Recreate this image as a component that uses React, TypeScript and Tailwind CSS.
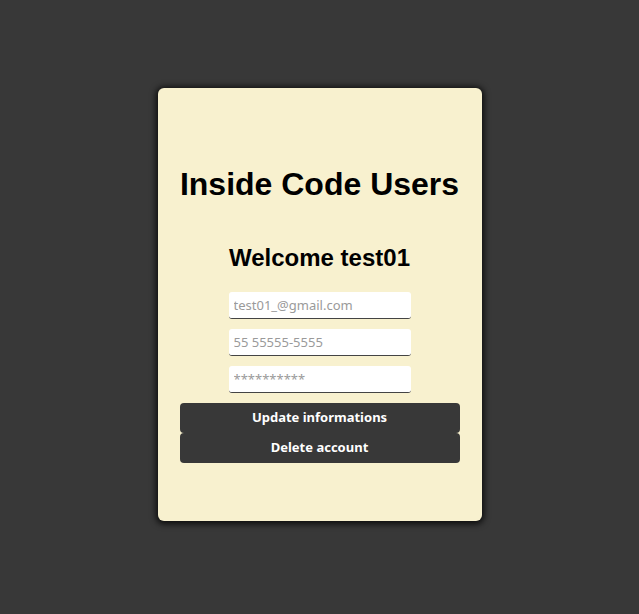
export default function App() {
  return (
    <div className="min-h-screen bg-[#383838] flex items-center justify-center pb-[5px]">
      <div className="w-[324px] h-[433px] bg-[#f8f1cf] rounded-[6px] shadow-[0_1px_6px_2px_rgba(0,0,0,0.8)] flex flex-col items-center pt-[78px] font-['Liberation_Sans',Arial,sans-serif]">
        <h1 className="text-[32px] leading-[37px] font-bold text-black">Inside Code Users</h1>
        <h2 className="mt-[41px] text-[24px] leading-[28px] font-bold text-black">Welcome test01</h2>

        <div className="mt-[20px] flex flex-col gap-[10px] font-['Noto_Sans',sans-serif]">
          <input
            className="w-[182px] h-[27px] bg-white rounded-[3px] border-b border-[#444] px-[5px] text-[13px] outline-none placeholder:text-[#9a9a9a]"
            placeholder="test01_@gmail.com"
          />
          <input
            className="w-[182px] h-[27px] bg-white rounded-[3px] border-b border-[#444] px-[5px] text-[13px] outline-none placeholder:text-[#9a9a9a]"
            placeholder="55 55555-5555"
          />
          <input
            className="w-[182px] h-[27px] bg-white rounded-[3px] border-b border-[#444] px-[5px] text-[13px] outline-none placeholder:text-[#9a9a9a]"
            placeholder="**********"
          />
        </div>

        <div className="mt-[10px] flex flex-col font-['Noto_Sans',sans-serif]">
          <button className="w-[280px] h-[30px] bg-[#383838] rounded-[4px] text-white text-[13px] font-bold">
            Update informations
          </button>
          <button className="w-[280px] h-[30px] bg-[#383838] rounded-[4px] text-white text-[13px] font-bold">
            Delete account
          </button>
        </div>
      </div>
    </div>
  )
}
